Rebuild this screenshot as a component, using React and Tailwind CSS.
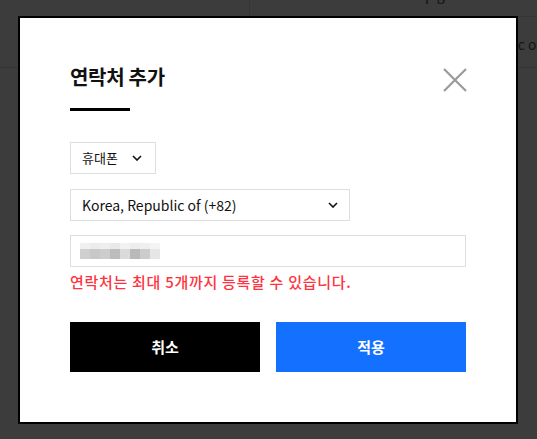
import React from "react";

const font = { fontFamily: '"Noto Sans CJK KR", "Noto Sans", sans-serif' };

function Chevron({ className = "" }) {
  return (
    <svg className={className} width="10" height="6" viewBox="0 0 10 6" fill="none">
      <path d="M1 1 L5 5 L9 1" stroke="#111" strokeWidth="1.6" />
    </svg>
  );
}

const topRow = ["#f0f0f0", "#ececec", "#eeeeee", "#e9e9e9", "#f2f2f2", "#ededed", "#efefef", "#f4f4f4"];
const botRow = ["#cfcfcf", "#c8c8c8", "#cdcdcd", "#bcbcbc", "#dadada", "#b9b9b9", "#cccccc", "#e6e6e6"];

export default function App() {
  return (
    <div className="relative w-[537px] h-[439px] overflow-hidden bg-[#3c3c3c]" style={font}>
      {/* background page */}
      <div className="flex h-[68px] border-b border-[#333333]">
        <div className="w-[250px] border-r border-[#353535]"></div>
        <div className="flex-1 flex flex-col">
          <div className="h-[17px] border-b border-[#353535] relative">
            <span className="absolute left-[175px] top-[-16px] text-[14px] text-[#111]">p g</span>
          </div>
          <div className="flex-1 flex items-center justify-end">
            <span className="text-[14px] text-[#151515] mr-[-4px] mt-[4px]">c of</span>
          </div>
        </div>
      </div>

      {/* dialog */}
      <div className="absolute left-[18px] top-[16px] w-[500px] h-[408px] border-2 border-black bg-white px-[50px] pt-[45px]">
        <div className="flex items-start justify-between">
          <div>
            <h1 className="text-[20px] font-bold text-[#111] leading-[28px] tracking-[-0.3px]">연락처 추가</h1>
            <div className="mt-[17px] w-[60px] h-[3px] bg-black"></div>
          </div>
          <button className="mt-[5px] mr-[-1px] w-[24px] h-[24px]">
            <svg width="24" height="24" viewBox="0 0 24 24" fill="none">
              <path d="M1 1 L23 23 M23 1 L1 23" stroke="#9a9a9a" strokeWidth="2.2" />
            </svg>
          </button>
        </div>

        <div className="mt-[31px] flex h-[32px] w-[86px] items-center justify-between border border-[#dedede] pl-[11px] pr-[13px]">
          <span className="text-[13px] text-[#111]">휴대폰</span>
          <Chevron />
        </div>

        <div className="mt-[15px] flex h-[32px] w-[280px] items-center justify-between border border-[#dedede] pl-[11px] pr-[11px]">
          <span className="text-[14px] text-[#111]">Korea, Republic of (+82)</span>
          <Chevron />
        </div>

        <div className="mt-[14px] flex h-[32px] w-[396px] items-center border border-[#dedede] pl-[9px]">
          <div className="flex flex-col">
            <div className="flex">
              {topRow.map((c, i) => (
                <div key={i} className="w-[10px] h-[6px]" style={{ background: c }} />
              ))}
            </div>
            <div className="flex">
              {botRow.map((c, i) => (
                <div key={i} className="w-[10px] h-[10px]" style={{ background: c }} />
              ))}
            </div>
          </div>
        </div>

        <p className="mt-[5px] text-[15px] font-medium leading-[20px] text-[#ff3340] tracking-[0.7px]">
          연락처는 최대 5개까지 등록할 수 있습니다.
        </p>

        <div className="mt-[30px] flex gap-[16px]">
          <button className="h-[50px] w-[190px] bg-black text-white text-[15px] font-bold">취소</button>
          <button className="h-[50px] w-[190px] bg-[#1470ff] text-white text-[15px] font-bold">적용</button>
        </div>
      </div>
    </div>
  );
}
